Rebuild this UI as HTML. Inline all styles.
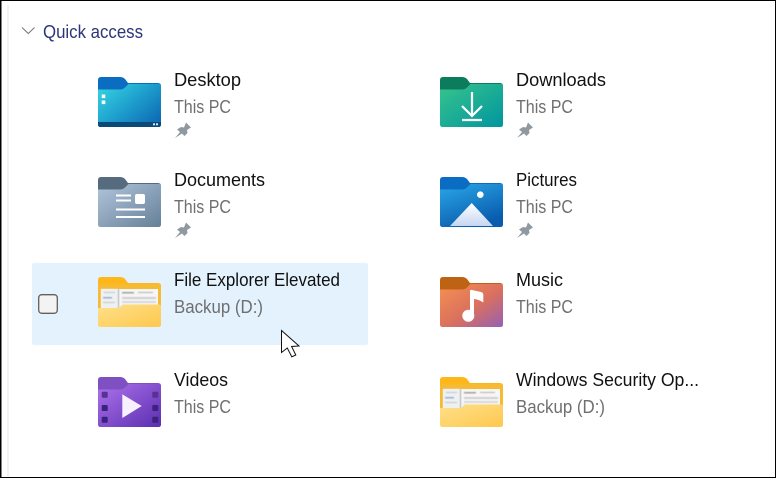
<!DOCTYPE html>
<html lang="en">
<head>
<meta charset="utf-8">
<title>Quick access</title>
<style>
html,body{margin:0;padding:0;background:#fff;width:776px;height:478px;overflow:hidden}
svg{display:block}
text{font-family:"Liberation Sans",sans-serif;font-size:18px}
.p{fill:#111}
.s{fill:#6f6f6f}
</style>
</head>
<body>
<svg width="776" height="478" viewBox="0 0 776 478" xmlns="http://www.w3.org/2000/svg">
<defs>
<filter id="bl" x="-5%" y="-5%" width="110%" height="110%"><feGaussianBlur stdDeviation="0.55"/></filter>
<linearGradient id="gd" x1="0" y1="0.1" x2="1" y2="0.9"><stop offset="0" stop-color="#36d2e0"/><stop offset="0.45" stop-color="#1fa3cf"/><stop offset="1" stop-color="#0d66b2"/></linearGradient>
<linearGradient id="gg" x1="0" y1="0" x2="1" y2="1"><stop offset="0" stop-color="#38c48c"/><stop offset="1" stop-color="#00959f"/></linearGradient>
<linearGradient id="gb" x1="0" y1="0" x2="1" y2="1"><stop offset="0" stop-color="#b0c5da"/><stop offset="1" stop-color="#668099"/></linearGradient>
<linearGradient id="gp" x1="0" y1="0" x2="0.5" y2="1"><stop offset="0" stop-color="#2aa8e8"/><stop offset="1" stop-color="#0a5cae"/></linearGradient>
<linearGradient id="gm" x1="0" y1="0" x2="1" y2="1"><stop offset="0" stop-color="#f69050"/><stop offset="0.55" stop-color="#d9705f"/><stop offset="1" stop-color="#9560b4"/></linearGradient>
<linearGradient id="gv" x1="0" y1="0" x2="1" y2="1"><stop offset="0" stop-color="#ae72ec"/><stop offset="1" stop-color="#5a2eb0"/></linearGradient>
<linearGradient id="gy" x1="0" y1="0" x2="1" y2="1"><stop offset="0" stop-color="#ffe08a"/><stop offset="1" stop-color="#fdc84e"/></linearGradient>
<linearGradient id="gm2" x1="0" y1="0" x2="0" y2="1"><stop offset="0" stop-color="#fff"/><stop offset="1" stop-color="#c6d6f3"/></linearGradient>
<path id="tab" d="M0 3Q0 0 3 0H22Q25 0 27 2L30 6H60Q63 6 63 9V20H0Z"/>
<path id="front" d="M0 12.5H22Q25 12.5 27 10.5L30.500 7H61Q63 7 63 9V47.500Q63 50 60.500 50H2.500Q0 50 0 47.500Z"/>
<path id="pin" d="M1 19L6 13L3 10.500L7 8L10 8.500L12 3.500L17 8.500L13 11L13.500 14L10.500 17L8 14.500Z"/>
<g id="yel">
<use href="#tab" fill="#fdb71a"/>
<rect x="0" y="7" width="63" height="30" rx="2" fill="#f7ba33"/>
<rect x="3" y="12" width="57" height="22" fill="#f6f6f6"/>
<g filter="url(#bl)">
<rect x="3" y="12" width="17" height="22" fill="#eef0f2"/>
<rect x="20" y="12" width="1" height="22" fill="#a8a8a8"/>
<rect x="6" y="15" width="11" height="1" fill="#b9c5d4"/>
<rect x="5" y="20" width="9" height="1.500" fill="#8ba9cf"/>
<rect x="5" y="25" width="12" height="1" fill="#c0c0c0"/>
<rect x="24" y="15" width="12" height="1.500" fill="#a0a0a0"/>
<rect x="40" y="15" width="15" height="1" fill="#b4b4b4"/>
<rect x="24" y="20" width="34" height="2" fill="#cfcfcf"/>
<rect x="24" y="24" width="34" height="2" fill="#d8d8d8"/>
<rect x="23" y="28" width="35" height="3" fill="#e2e2e2"/>
</g>
<path d="M0 31H19Q21 31 23 29.500L25 27.500H61Q63 27.500 63 29.500V47.500Q63 50 60.500 50H2.500Q0 50 0 47.500Z" fill="url(#gy)"/>
</g>
</defs>

<rect width="776" height="478" fill="#fff"/>
<rect x="7" y="5" width="2" height="473" fill="#f3f3f3"/>

<path d="M22 27.500L28.300 33.500L34.500 27.500" fill="none" stroke="#7a7a7a" stroke-width="1.100"/>
<text x="43" y="38" fill="#2c3578" textLength="100" lengthAdjust="spacingAndGlyphs">Quick access</text>

<rect x="32" y="263" width="336" height="82" rx="2" fill="#e3f2fd"/>
<rect x="38.700" y="294.700" width="18.600" height="18.600" rx="3" fill="#f3f3f3" stroke="#606060" stroke-width="1.300"/>

<!-- Desktop -->
<g transform="translate(98,77)">
<use href="#tab" fill="#0a6dc2"/>
<use href="#front" fill="url(#gd)"/>
<path d="M0 45H63V47.500Q63 50 60.500 50H2.500Q0 50 0 47.500Z" fill="#0b4a78"/>
<rect x="3.700" y="17.500" width="3.600" height="3.600" fill="#fff"/>
<rect x="3.700" y="23.500" width="3.600" height="3.600" fill="#fff"/>
<rect x="55" y="46.300" width="2" height="2" fill="#dfe9f0"/>
<rect x="58" y="46.300" width="2" height="2" fill="#dfe9f0"/>
</g>
<text class="p" x="174" y="86" textLength="67" lengthAdjust="spacingAndGlyphs">Desktop</text>
<text class="s" x="174" y="113" textLength="57" lengthAdjust="spacingAndGlyphs">This PC</text>
<use href="#pin" x="174" y="119" fill="#8f999f"/>

<!-- Downloads -->
<g transform="translate(440,77)">
<use href="#tab" fill="#0b7d5d"/>
<use href="#front" fill="url(#gg)"/>
<path d="M32 15V39M22 29L32 39L42 29M22 43H42" fill="none" stroke="#fff" stroke-width="2.200"/>
</g>
<text class="p" x="516" y="86" textLength="90" lengthAdjust="spacingAndGlyphs">Downloads</text>
<text class="s" x="516" y="113" textLength="57" lengthAdjust="spacingAndGlyphs">This PC</text>
<use href="#pin" x="516" y="119" fill="#8f999f"/>

<!-- Documents -->
<g transform="translate(98,177)">
<use href="#tab" fill="#566c7e"/>
<use href="#front" fill="url(#gb)"/>
<path d="M18 18.500H33M18 23.500H33M18 32.500H47M18 40H47" stroke="#fff" stroke-width="2"/>
<rect x="37" y="17" width="10" height="10" rx="2" fill="#fff"/>
</g>
<text class="p" x="174" y="186" textLength="91" lengthAdjust="spacingAndGlyphs">Documents</text>
<text class="s" x="174" y="213" textLength="57" lengthAdjust="spacingAndGlyphs">This PC</text>
<use href="#pin" x="174" y="219" fill="#8f999f"/>

<!-- Pictures -->
<g transform="translate(440,177)">
<use href="#tab" fill="#0b6cc4"/>
<use href="#front" fill="url(#gp)"/>
<circle cx="40.300" cy="17.700" r="3.300" fill="#fff"/>
<path d="M31.700 26L53 49H10Z" fill="url(#gm2)"/>
</g>
<text class="p" x="516" y="186" textLength="61" lengthAdjust="spacingAndGlyphs">Pictures</text>
<text class="s" x="516" y="213" textLength="57" lengthAdjust="spacingAndGlyphs">This PC</text>
<use href="#pin" x="516" y="219" fill="#8f999f"/>

<!-- File Explorer Elevated -->
<use href="#yel" x="98" y="277"/>
<text class="p" x="174" y="286" textLength="166" lengthAdjust="spacingAndGlyphs">File Explorer Elevated</text>
<text class="s" x="174" y="313" textLength="89" lengthAdjust="spacingAndGlyphs">Backup (D:)</text>

<!-- Music -->
<g transform="translate(440,277)">
<use href="#tab" fill="#bd6313"/>
<use href="#front" fill="url(#gm)"/>
<circle cx="28.300" cy="38.700" r="6" fill="#fff"/>
<path d="M30 39V14Q30 12.500 32 13L41 15Q43.300 15.500 43.300 18V25.500Q39 22.500 34 22V39Z" fill="#fff"/>
</g>
<text class="p" x="516" y="286" textLength="47" lengthAdjust="spacingAndGlyphs">Music</text>
<text class="s" x="516" y="313" textLength="57" lengthAdjust="spacingAndGlyphs">This PC</text>

<!-- Videos -->
<g transform="translate(98,377)">
<use href="#tab" fill="#7f50c2"/>
<use href="#front" fill="url(#gv)"/>
<g fill="#3b2180">
<rect x="3.700" y="14.700" width="6" height="6" rx="1" fill="#55338f"/>
<rect x="3.700" y="28" width="6" height="6" rx="1"/>
<rect x="3.700" y="39.700" width="6" height="6" rx="1"/>
<rect x="54.300" y="14.700" width="6" height="6" rx="1" fill="#55338f"/>
<rect x="54.300" y="28" width="6" height="6" rx="1"/>
<rect x="54.300" y="39.700" width="6" height="6" rx="1"/>
</g>
<path d="M24.300 17.300L43.700 29L24.300 41Z" fill="#f6f0ff"/>
</g>
<text class="p" x="174" y="386" textLength="54" lengthAdjust="spacingAndGlyphs">Videos</text>
<text class="s" x="174" y="413" textLength="57" lengthAdjust="spacingAndGlyphs">This PC</text>

<!-- Windows Security -->
<use href="#yel" x="440" y="377"/>
<text class="p" x="516" y="386" textLength="183" lengthAdjust="spacingAndGlyphs">Windows Security Op...</text>
<text class="s" x="516" y="413" textLength="89" lengthAdjust="spacingAndGlyphs">Backup (D:)</text>

<!-- cursor -->
<path d="M281.500 330.500V352.500L287.300 348L291.800 356.800L295.800 355L291.600 346.500L299 346Z" fill="#fff" stroke="#111" stroke-width="1" stroke-linejoin="miter"/>

<!-- window border -->
<rect x="0" y="0" width="776" height="1" fill="#000"/>
<rect x="0" y="0" width="1.500" height="478" fill="#000"/>
<rect x="775" y="0" width="1" height="478" fill="#000"/>
<rect x="0" y="477" width="776" height="1" fill="#000"/>
</svg>
</body>
</html>
